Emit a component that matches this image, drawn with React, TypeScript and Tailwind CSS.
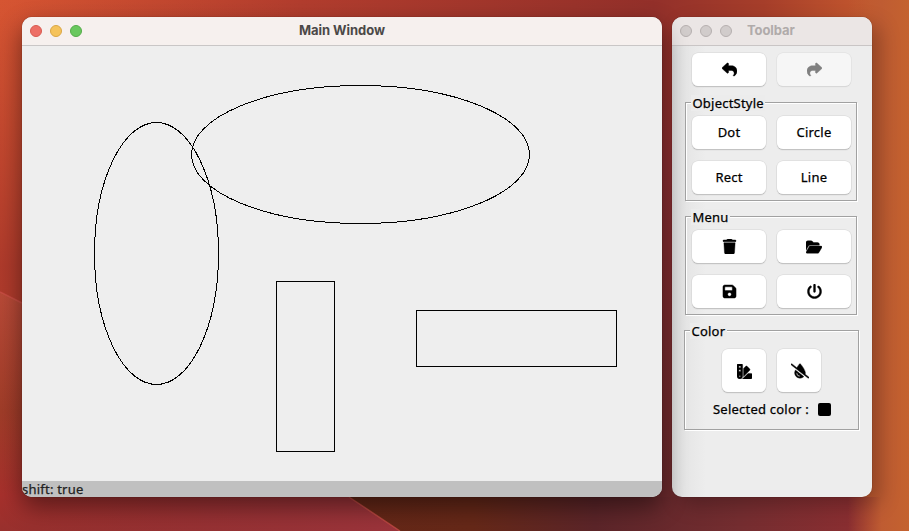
import type { ReactNode } from "react";
import {
  FaReply,
  FaShare,
  FaTrash,
  FaFolderOpen,
  FaFloppyDisk,
  FaPowerOff,
  FaSwatchbook,
  FaDropletSlash,
} from "react-icons/fa6";

function Wallpaper() {
  return (
    <svg className="absolute inset-0" width="909" height="531" viewBox="0 0 909 531">
      <defs>
        <linearGradient id="top" x1="0" x2="1">
          <stop offset="0" stopColor="#d65532" />
          <stop offset="0.33" stopColor="#b23d2e" />
          <stop offset="0.72" stopColor="#93302a" />
          <stop offset="0.84" stopColor="#a63e2a" />
          <stop offset="0.93" stopColor="#bd522d" />
          <stop offset="1" stopColor="#c4602f" />
        </linearGradient>
        <linearGradient id="left" x1="0" y1="0" x2="0" y2="1">
          <stop offset="0" stopColor="#b03a2b" stopOpacity="0" />
          <stop offset="0.5" stopColor="#a8362a" stopOpacity="0.85" />
          <stop offset="1" stopColor="#a8362a" />
        </linearGradient>
        <linearGradient id="facet" x1="0" y1="292" x2="0" y2="531" gradientUnits="userSpaceOnUse">
          <stop offset="0" stopColor="#b84a37" />
          <stop offset="0.5" stopColor="#a03c28" />
          <stop offset="0.85" stopColor="#a7302c" />
          <stop offset="1" stopColor="#98302d" />
        </linearGradient>
        <linearGradient id="facetFade" x1="0" x2="400" y1="0" y2="0" gradientUnits="userSpaceOnUse">
          <stop offset="0" stopColor="#8d3038" stopOpacity="0" />
          <stop offset="1" stopColor="#9c343b" />
        </linearGradient>
        <linearGradient id="bottom" x1="340" x2="872" y1="0" y2="0" gradientUnits="userSpaceOnUse">
          <stop offset="0" stopColor="#652717" />
          <stop offset="0.25" stopColor="#662818" />
          <stop offset="0.48" stopColor="#5c2529" />
          <stop offset="0.75" stopColor="#742d30" />
          <stop offset="1" stopColor="#8d2e31" />
        </linearGradient>
        <linearGradient id="gap" x1="0" y1="0" x2="0" y2="1">
          <stop offset="0" stopColor="#8d2c2b" stopOpacity="0" />
          <stop offset="0.3" stopColor="#8a2e31" />
          <stop offset="1" stopColor="#6b2a2d" />
        </linearGradient>
        <linearGradient id="right" x1="848" x2="909" y1="0" y2="0" gradientUnits="userSpaceOnUse">
          <stop offset="0" stopColor="#c05b31" stopOpacity="0" />
          <stop offset="0.55" stopColor="#bf5c32" />
          <stop offset="1" stopColor="#c4622f" />
        </linearGradient>
      </defs>
      <rect width="909" height="531" fill="url(#top)" />
      <rect width="400" height="531" fill="url(#left)" />
      <path d="M0 292 L22 303 L349 497 L400 531 H0Z" fill="url(#facet)" />
      <path d="M0 292 L22 303 L349 497 L400 531 H0Z" fill="url(#facetFade)" />
      <path d="M349 497 H909 V531 H400Z" fill="url(#bottom)" />
      <path d="M0 292 L22 303 M349 497 L400 531" stroke="#d0514a" strokeOpacity="0.65" strokeWidth="1.5" />
      <rect x="640" y="17" width="60" height="480" fill="url(#gap)" />
      <rect x="848" width="61" height="531" fill="url(#right)" />
    </svg>
  );
}

function TitleBar({ title, active }: { title: string; active: boolean }) {
  return (
    <header
      className={`flex h-[29px] shrink-0 items-center border-b pl-2 ${
        active ? "border-[#c9c6c6] bg-[#f6f0ee]" : "border-[#c9c5c5] bg-[#ebe6e5]"
      }`}
    >
      <div className="flex gap-2">
        <span className={`size-3 rounded-full border ${active ? "border-[#d85a50] bg-[#ed6f66]" : "border-[#b6b0af] bg-[#d1cccb]"}`} />
        <span className={`size-3 rounded-full border ${active ? "border-[#d9a644] bg-[#f5c35b]" : "border-[#b6b0af] bg-[#d1cccb]"}`} />
        <span className={`size-3 rounded-full border ${active ? "border-[#54ab49] bg-[#69c85e]" : "border-[#b6b0af] bg-[#d1cccb]"}`} />
      </div>
      <h1
        className={`-mt-0.5 font-[Inter,sans-serif] text-[13px] leading-4 font-bold [-webkit-text-stroke:0] ${
          active ? "ml-[217px] tracking-[-0.05px] text-[#4b4847]" : "ml-[15px] tracking-[-0.1px] text-[#b0abaa]"
        }`}
      >
        {title}
      </h1>
    </header>
  );
}

function Button({ children, disabled, square }: { children: ReactNode; disabled?: boolean; square?: boolean }) {
  return (
    <button
      disabled={disabled}
      className={`flex items-center justify-center rounded-[6px] [&_svg]:stroke-current [&_svg]:stroke-[14px] ${
        square ? "h-[43px] w-11 pt-px pl-px" : "h-[33px] w-[74px]"
      } ${
        disabled
          ? "bg-[#f6f6f6] text-[#808080] shadow-[0_0_0_0.5px_#dddddd,0_1px_1px_#cfcfcf]"
          : "bg-white text-black shadow-[0_0_0_0.5px_#d6d6d6,0_1px_1px_#aaaaaa]"
      }`}
    >
      {children}
    </button>
  );
}

function Group({ title, className, children }: { title: string; className: string; children: ReactNode }) {
  return (
    <section className={`relative border border-[#a1a1a1] shadow-[inset_1px_1px_0_#fff,1px_1px_0_#fff] ${className}`}>
      <h2 className="absolute -top-2 left-[5px] bg-[#ececec] px-[1.5px] leading-4 whitespace-nowrap">{title}</h2>
      {children}
    </section>
  );
}

export default function App() {
  return (
    <div className="relative h-[531px] w-[909px] overflow-hidden font-['Noto_Sans',sans-serif] text-[13px] font-normal tracking-[0.22px] text-black [-webkit-text-stroke:0.25px]">
      <Wallpaper />
      <div className="relative flex gap-2.5 pt-[17px] pl-[22px]">
        <main className="relative flex h-[480px] w-[640px] flex-col overflow-hidden rounded-[10px] bg-[#eeeeee] shadow-[0_0_1px_rgba(0,0,0,0.6),0_10px_24px_rgba(0,0,0,0.45)]">
          <TitleBar title="Main Window" active />
          <svg className="block shrink-0" width="640" height="435" viewBox="22 46 640 435" fill="none" stroke="#000" shapeRendering="crispEdges">
            <ellipse cx="360.5" cy="154.5" rx="169" ry="69" />
            <ellipse cx="156.5" cy="253.5" rx="62" ry="131" />
            <rect x="276.5" y="281.5" width="58" height="170" />
            <rect x="416.5" y="310.5" width="200" height="56" />
          </svg>
          <footer className="h-4 bg-[#c0c0c0] leading-[17px] text-[#222]">shift: true</footer>
        </main>

        <aside className="flex h-[480px] w-[200px] flex-col overflow-hidden rounded-[10px] bg-[linear-gradient(90deg,#dadada_0,#e5e5e5_12px,#ededed_34px)] shadow-[0_0_1px_rgba(0,0,0,0.6),8px_8px_20px_rgba(0,0,0,0.25)]">
          <TitleBar title="Toolbar" active={false} />
          <div className="flex gap-[11px] pt-[7px] pl-5">
            <Button><FaReply size={15} /></Button>
            <Button disabled><FaShare size={15} /></Button>
          </div>
          <Group title="ObjectStyle" className="mt-4 ml-[13px] h-[99px] w-[172px]">
            <div className="grid grid-cols-[74px_74px] gap-x-[11px] gap-y-3 pt-[13px] pl-1.5">
              <Button>Dot</Button>
              <Button>Circle</Button>
              <Button>Rect</Button>
              <Button>Line</Button>
            </div>
          </Group>
          <Group title="Menu" className="mt-[15px] ml-[13px] h-[99px] w-[172px]">
            <div className="grid grid-cols-[74px_74px] gap-x-[11px] gap-y-3 pt-[13px] pl-1.5">
              <Button><FaTrash size={15} /></Button>
              <Button><FaFolderOpen size={16} /></Button>
              <Button><FaFloppyDisk size={15} /></Button>
              <Button><FaPowerOff size={15} /></Button>
            </div>
          </Group>
          <Group title="Color" className="mt-[15px] ml-3 h-[100px] w-[175px]">
            <div className="flex gap-[11px] pt-[18px] pl-[37px]">
              <Button square><FaSwatchbook size={15} /></Button>
              <Button square><FaDropletSlash size={18} /></Button>
            </div>
            <div className="mt-2 flex items-center pl-7">
              <span className="w-[105px] leading-[18px] whitespace-nowrap">Selected color :</span>
              <span className="h-[13px] w-[13px] rounded-[2px] bg-black" />
            </div>
          </Group>
        </aside>
      </div>
    </div>
  );
}
